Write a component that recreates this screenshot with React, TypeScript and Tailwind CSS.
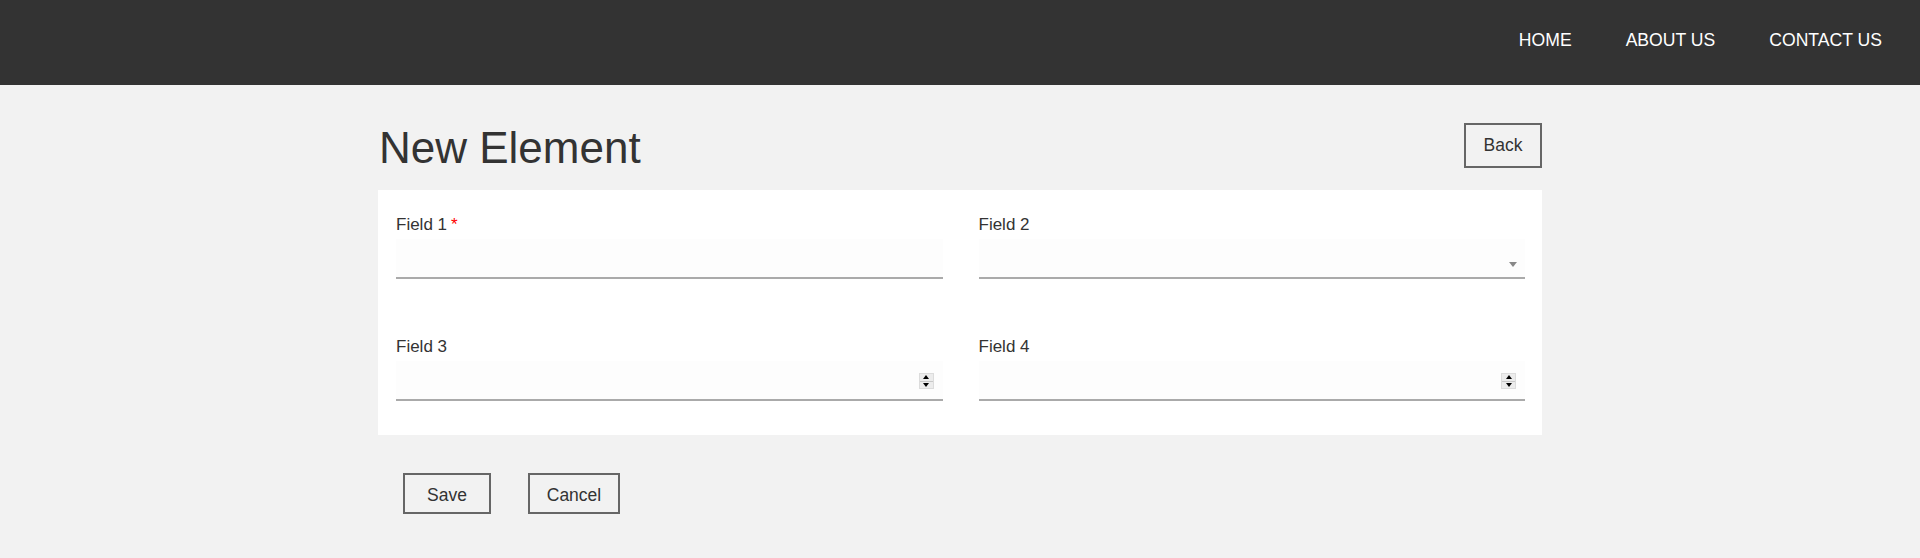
import React from "react";

const font = { fontFamily: '"Liberation Sans", Arial, sans-serif' };

function Spinner() {
  return (
    <div className="flex h-[16px] w-[15px] flex-col border border-[#dcdcdc] bg-[#ececec]">
      <div className="flex flex-1 items-center justify-center border-b border-[#c8c8c8]">
        <div className="h-0 w-0 border-x-[3.5px] border-b-[4px] border-x-transparent border-b-black" />
      </div>
      <div className="flex flex-1 items-center justify-center">
        <div className="h-0 w-0 border-x-[3.5px] border-t-[4px] border-x-transparent border-t-black" />
      </div>
    </div>
  );
}

function Field({
  label,
  required,
  kind,
}: {
  label: string;
  required?: boolean;
  kind: "text" | "select" | "number";
}) {
  return (
    <div>
      <div className="mb-[4px] h-[20px] text-[17px] leading-[20px] text-[#333]">
        {label}
        {required && <span className="ml-[4px] text-[#ff0000]">*</span>}
      </div>
      <div className="flex h-[40px] items-center justify-end border-b-2 border-[#aaaaaa] bg-[#fdfdfd] pr-[9px]">
        {kind === "select" && (
          <div className="mr-[-1px] mt-[12px] h-0 w-0 border-x-[4px] border-t-[5px] border-x-transparent border-t-[#888]" />
        )}
        {kind === "number" && (
          <div className="mt-[2px]">
            <Spinner />
          </div>
        )}
      </div>
    </div>
  );
}

function OutlineButton({ children, className }: { children: React.ReactNode; className: string }) {
  return (
    <button
      className={`flex items-center justify-center border-2 border-[#666] bg-transparent text-[17.5px] text-[#333] ${className}`}
    >
      {children}
    </button>
  );
}

export default function App() {
  return (
    <div className="min-h-screen bg-[#f2f2f2]" style={font}>
      {/* Header */}
      <header className="flex h-[85px] items-start justify-end bg-[#333333] pr-[11px] pt-[30px]">
        {["HOME", "ABOUT US", "CONTACT US"].map((item) => (
          <a key={item} className="px-[27px] text-[17.6px] leading-[21px] text-white">
            {item}
          </a>
        ))}
      </header>

      <main className="mx-auto w-[1164px]">
        {/* Title row */}
        <div className="mt-[37px] flex h-[51px] items-start justify-between">
          <h1 className="pl-[1px] text-[44px] leading-[51px] text-[#333]">New Element</h1>
          <OutlineButton className="mt-[1px] h-[45px] w-[78px]">Back</OutlineButton>
        </div>

        {/* Form card */}
        <div className="mt-[17px] bg-white pb-[34px] pl-[18px] pr-[17px] pt-[25px]">
          <div className="grid grid-cols-2 gap-x-[36px] gap-y-[58px]">
            <Field label="Field 1" required kind="text" />
            <Field label="Field 2" kind="select" />
            <Field label="Field 3" kind="number" />
            <Field label="Field 4" kind="number" />
          </div>
        </div>

        {/* Actions */}
        <div className="mt-[38px] flex gap-[37px] pl-[25px]">
          <OutlineButton className="h-[41px] w-[88px] pt-[4px]">Save</OutlineButton>
          <OutlineButton className="h-[41px] w-[92px] pt-[4px]">Cancel</OutlineButton>
        </div>
      </main>
    </div>
  );
}
